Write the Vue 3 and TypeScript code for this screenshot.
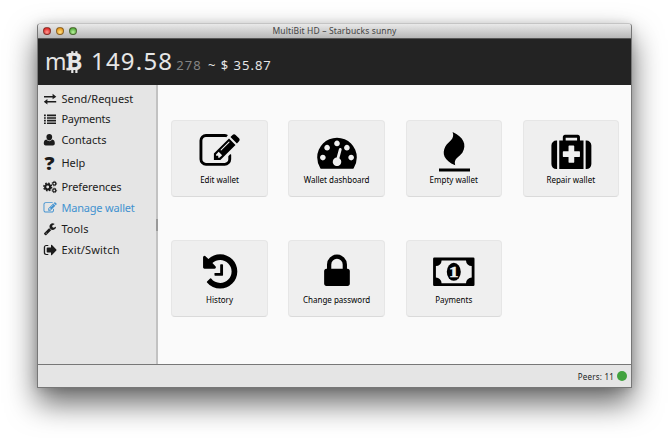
<script setup lang="ts">
interface NavItem {
  id: string
  label: string
  height: number
  tracking: number
}
interface Action {
  id: string
  label: string
}

const nav: NavItem[] = [
  { id: 'exchange', label: 'Send/Request', height: 20, tracking: 0 },
  { id: 'list', label: 'Payments', height: 20, tracking: -0.25 },
  { id: 'user', label: 'Contacts', height: 22, tracking: 0 },
  { id: 'help', label: 'Help', height: 24, tracking: 0 },
  { id: 'cogs', label: 'Preferences', height: 23, tracking: -0.1 },
  { id: 'edit', label: 'Manage wallet', height: 20, tracking: -0.18 },
  { id: 'wrench', label: 'Tools', height: 21, tracking: 0.1 },
  { id: 'exit', label: 'Exit/Switch', height: 22, tracking: 0.17 },
]

const actions: Action[] = [
  { id: 'edit', label: 'Edit wallet' },
  { id: 'dashboard', label: 'Wallet dashboard' },
  { id: 'empty', label: 'Empty wallet' },
  { id: 'repair', label: 'Repair wallet' },
  { id: 'history', label: 'History' },
  { id: 'password', label: 'Change password' },
  { id: 'money', label: 'Payments' },
]

const editPath =
  'M888 1184l116-116-152-152-116 116v56h96v96h56zm440-720q-16-16-33 1l-350 350q-17 17-1 33t33-1l350-350q17-17 1-33zm80 594v190q0 119-84.5 203.5t-203.5 84.5h-832q-119 0-203.5-84.5t-84.5-203.5v-832q0-119 84.5-203.5t203.5-84.5h832q63 0 117 25 15 7 18 23 3 17-9 29l-49 49q-14 14-32 8-23-6-45-6h-832q-66 0-113 47t-47 113v832q0 66 47 113t113 47h832q66 0 113-47t47-113v-126q0-13 9-22l64-64q15-15 35-7t20 29zm-96-738l288 288-672 672h-288v-288zm444 132l-92 92-288-288 92-92q28-28 68-28t68 28l152 152q28 28 28 68t-28 68z'
</script>

<template>
  <div class="desktop">
    <div class="window">
      <div class="titlebar">
        <div class="lights">
          <i class="light red"></i><i class="light amber"></i><i class="light green"></i>
        </div>
        <span class="title">MultiBit HD – Starbucks sunny</span>
      </div>

      <header class="balance">
        <span class="milli">m</span>
        <svg class="bitcoin" viewBox="0 0 18 24">
          <rect x="5.2" y="1.2" width="2.2" height="4" />
          <rect x="9.3" y="1.2" width="2.2" height="4" />
          <rect x="5.2" y="19" width="2.2" height="4" />
          <rect x="9.3" y="19" width="2.2" height="4" />
          <rect x="0.4" y="3.8" width="4" height="2.6" />
          <rect x="0.4" y="17.8" width="4" height="2.6" />
          <text x="0.6" y="20.4" textLength="16" lengthAdjust="spacingAndGlyphs">B</text>
        </svg>
        <span class="amount">149.58</span>
        <span class="minor">278</span>
        <span class="fiat">~ $ 35.87</span>
      </header>

      <div class="body">
        <nav class="sidebar">
          <a
            v-for="item in nav"
            :key="item.id"
            class="nav-item"
            :class="{ active: item.id === 'edit' }"
            :style="{ height: item.height + 'px', letterSpacing: item.tracking + 'px' }"
          >
            <svg class="nav-icon" viewBox="0 0 14 14">
              <g v-if="item.id === 'exchange'">
                <path d="M1 4h8.6V1.8L13.3 4.7 9.6 7.3V5.4H1zM13.2 9.1H4.4V7L.8 9.8l3.6 2.7v-1.9h8.8z" />
              </g>
              <g v-else-if="item.id === 'list'">
                <path d="M1 2.6h1.8v1.6H1zM4 2.6h9v1.6H4zM1 5.2h1.8v1.6H1zM4 5.2h9v1.6H4zM1 7.8h1.8v1.6H1zM4 7.8h9v1.6H4zM1 10.4h1.8V12H1zM4 10.4h9V12H4z" />
              </g>
              <g v-else-if="item.id === 'user'">
                <path d="M6.3 1.1c1.8 0 2.9 1.3 2.9 3s-1.2 3.5-2.9 3.5-2.9-1.8-2.9-3.5 1.1-3 2.9-3zM3.4 6.6Q4.7 8.3 6.3 8.3T9.2 6.6c2 .2 2.6 2 2.6 4 0 1.2-.9 1.9-1.9 1.9H2.7c-1 0-1.9-.7-1.9-1.9 0-2 .6-3.8 2.6-4z" />
              </g>
              <text v-else-if="item.id === 'help'" class="question" x="1.4" y="13.6" textLength="10" lengthAdjust="spacingAndGlyphs">?</text>
              <g v-else-if="item.id === 'cogs'" class="cogs">
                <circle cx="4.7" cy="7" r="2.5" stroke-width="2.2" />
                <circle cx="4.7" cy="7" r="3.9" stroke-width="1.4" stroke-dasharray="1.65 1.413" />
                <circle cx="11.3" cy="3.6" r="1.5" stroke-width="1.2" />
                <circle cx="11.3" cy="3.6" r="2.3" stroke-width=".8" stroke-dasharray="1 .806" />
                <circle cx="11.3" cy="10.4" r="1.5" stroke-width="1.2" />
                <circle cx="11.3" cy="10.4" r="2.3" stroke-width=".8" stroke-dasharray="1 .806" />
              </g>
              <path v-else-if="item.id === 'edit'" transform="translate(.5 .2) scale(.0074)" :d="editPath" />
              <path
                v-else-if="item.id === 'wrench'"
                transform="translate(.4 .4) scale(.0073)"
                d="M448 1472q0-26-19-45t-45-19-45 19-19 45 19 45 45 19 45-19 19-45zm644-420l-682 682q-37 37-90 37-52 0-91-37l-106-108q-38-36-38-90 0-53 38-91l681-681q39 98 114.500 173.500t173.500 114.500zm634-435q0 39-23 106-47 134-164.500 217.500t-258.500 83.500q-185 0-316.500-131.500t-131.500-316.500 131.500-316.500 316.500-131.500q58 0 121.500 16.500t107.500 46.500q16 11 16 28t-16 28l-293 169v224l193 107q5-3 79-48.500t135.500-81 70.500-35.500q15 0 23.500 10t8.500 25z"
              />
              <g v-else>
                <path d="M5.3 1.9H3.2C1.800 1.9.8 2.9.8 4.200v5.600c0 1.300 1 2.300 2.400 2.300h2.100v-1.200H3.400c-.8 0-1.300-.5-1.300-1.300V4.400c0-.8.5-1.300 1.300-1.300h1.900zM8 2.300c0-.6.6-.8 1-.4L13.300 6.400c.4.400.4.800 0 1.200L9 12.100c-.4.400-1 .2-1-.4V9.400H4.500c-.5 0-.8-.2-.8-.7V5.300c0-.5.3-.7.8-.7H8z" />
              </g>
            </svg>
            <span>{{ item.label }}</span>
          </a>
        </nav>
        <div class="divider"><i class="grip"></i></div>

        <main class="cards">
          <button v-for="action in actions" :key="action.id" class="card" type="button">
            <svg class="card-icon" viewBox="0 0 44 44">
              <path v-if="action.id === 'edit'" transform="translate(1.5 1.200) scale(.0225)" :d="editPath" />
              <path
                v-else-if="action.id === 'dashboard'"
                transform="translate(2.200 2.100) scale(.0221)"
                d="M384 1152q0-53-37.500-90.500t-90.500-37.500-90.500 37.500-37.500 90.500 37.500 90.500 90.500 37.500 90.500-37.500 37.500-90.500zm192-448q0-53-37.500-90.500t-90.500-37.500-90.500 37.500-37.500 90.500 37.500 90.500 90.500 37.500 90.500-37.500 37.500-90.500zm428 481l101-382q6-26-7.500-48.500t-38.500-29.500-48 6.500-30 39.500l-101 382q-60 5-107 43.500t-63 98.500q-20 77 20 146t117 89 146-20 89-117q16-60-6-117t-72-91zm660-33q0-53-37.500-90.500t-90.500-37.500-90.500 37.500-37.500 90.500 37.500 90.500 90.500 37.500 90.500-37.500 37.500-90.500zm-640-640q0-53-37.500-90.500t-90.500-37.500-90.500 37.500-37.500 90.500 37.500 90.500 90.500 37.500 90.500-37.500 37.500-90.500zm448 192q0-53-37.500-90.500t-90.500-37.500-90.500 37.500-37.500 90.500 37.500 90.500 90.500 37.500 90.500-37.500 37.500-90.500zm320 448q0 261-141 483-19 29-54 29h-1402q-35 0-54-29-141-221-141-483 0-182 71-348t191-286 286-191 348-71 348 71 286 191 191 286 71 348z"
              />
              <path
                v-else-if="action.id === 'empty'"
                d="M20.600 2C31.500 7 35 14.500 30.500 22.500c-3 4.700-9.300 5.500-7.300 12.800C12 30.500 9.500 23.500 13.500 16.200c3-4.800 9.800-7 7.100-14.200zM7 38.400h31v3.200h-31z"
              />
              <path
                v-else-if="action.id === 'repair'"
                transform="translate(2.400 2) scale(.0223)"
                d="M1280 1088v-192q0-14-9-23t-23-9h-224v-224q0-14-9-23t-23-9h-192q-14 0-23 9t-9 23v224h-224q-14 0-23 9t-9 23v192q0 14 9 23t23 9h224v224q0 14 9 23t23 9h192q14 0 23-9t9-23v-224h224q14 0 23-9t9-23zm-640-704h512v-128h-512v128zm-384 0v1280h-32q-92 0-158-66t-66-158v-832q0-92 66-158t158-66h32zm1184 0v1280h-1088v-1280h160v-160q0-40 28-68t68-28h576q40 0 68 28t28 68v160h160zm352 224v832q0 92-66 158t-158 66h-32v-1280h32q92 0 158 66t66 158z"
              />
              <path
                v-else-if="action.id === 'history'"
                transform="translate(2.200 1.500) scale(.0223)"
                d="M1664 896q0 156-61 298t-164 245-245 164-298 61q-172 0-327-72.500t-264-204.500q-7-10-6.500-22.500t8.500-20.500l137-138q10-9 25-9 16 2 23 12 73 95 179 147t225 52q104 0 198.500-40.500t163.500-109.500 109.500-163.500 40.500-198.500-40.500-198.500-109.500-163.500-163.500-109.500-198.500-40.500q-98 0-188 35.500t-160 101.500l137 138q31 30 14 69-17 40-59 40h-448q-26 0-45-19t-19-45v-448q0-42 40-59 39-17 69 14l130 129q107-101 244.500-156.500t284.500-55.500q156 0 298 61t245 164 164 245 61 298zm-640-288v448q0 14-9 23t-23 9h-320q-14 0-23-9t-9-23v-64q0-14 9-23t23-9h224v-352q0-14 9-23t23-9h64q14 0 23 9t9 23z"
              />
              <path
                v-else-if="action.id === 'password'"
                transform="translate(2 1.700) scale(.0223)"
                d="M640 768h512v-192q0-106-75-181t-181-75-181 75-75 181v192zm832 96v576q0 40-28 68t-68 28h-960q-40 0-68-28t-28-68v-576q0-40 28-68t68-28h32v-192q0-184 132-316t316-132 316 132 132 316v192h32q40 0 68 28t28 68z"
              />
              <g v-else>
                <path
                  fill-rule="evenodd"
                  d="M2.300 7.500h39a1.200 1.200 0 0 1 1.200 1.200v26a1.200 1.200 0 0 1-1.200 1.200H2.300a1.200 1.200 0 0 1-1.200-1.200v-26A1.200 1.200 0 0 1 2.300 7.500zM9.600 10.400a5.800 5.800 0 0 1-5.700 5.700v11.500a5.800 5.800 0 0 1 5.700 5.700h24.400a5.800 5.800 0 0 1 5.700-5.700V16.100a5.800 5.800 0 0 1-5.700-5.700z"
                />
                <ellipse cx="21.800" cy="21.800" rx="7" ry="9" />
                <text class="one" x="16.900" y="27.300" textLength="9.500" lengthAdjust="spacingAndGlyphs">1</text>
              </g>
            </svg>
            <span class="card-label">{{ action.label }}</span>
          </button>
        </main>
      </div>

      <footer class="status">
        <span>Peers: 11</span>
        <i class="online"></i>
      </footer>
    </div>
  </div>
</template>

<style>
body {
  background: #fff;
  overflow: hidden;
}
</style>

<style scoped>
.desktop {
  box-sizing: border-box;
  width: 669px;
  height: 438px;
  padding: 23px 37px 51px;
  overflow: hidden;
  font-family: 'Noto Sans', 'Open Sans', sans-serif;
  color: #222;
}
.window {
  box-sizing: border-box;
  display: flex;
  flex-direction: column;
  width: 595px;
  height: 365px;
  border: 1px solid #777;
  border-top-color: #c4c4c4;
  border-radius: 4px 4px 1px 1px;
  overflow: hidden;
  background: #e5e5e5;
  box-shadow: 0 15px 30px rgba(0, 0, 0, 0.6), 0 1px 10px rgba(0, 0, 0, 0.14);
}
.titlebar {
  display: grid;
  grid-template-columns: 60px 1fr 60px;
  align-items: center;
  height: 14px;
  flex: none;
  background: linear-gradient(#e9e9e9, #b7b7b7);
  border-bottom: 1px solid #555;
}
.lights {
  display: flex;
  gap: 5px;
  padding-left: 5px;
}
.light {
  box-sizing: border-box;
  width: 8px;
  height: 8px;
  border-radius: 50%;
  border: 1px solid rgba(60, 40, 30, 0.55);
}
.red { background: radial-gradient(circle at 50% 70%, #ff9b93, #e32d2c 70%); }
.amber { background: radial-gradient(circle at 50% 70%, #ffe28a, #e79a1b 75%); }
.green { background: radial-gradient(circle at 50% 70%, #b9f39d, #52aa3b 75%); }
.title {
  text-align: center;
  font-size: 8.5px;
  line-height: 14px;
  color: #444;
  letter-spacing: 0.14px;
  white-space: nowrap;
}
.balance {
  display: flex;
  align-items: baseline;
  height: 46px;
  flex: none;
  box-sizing: border-box;
  padding-left: 7px;
  line-height: 44px;
  background: #232323;
  color: #e6e6e6;
  white-space: nowrap;
}
.milli { font-size: 23px; }
.bitcoin {
  width: 18px;
  height: 24px;
  align-self: center;
  fill: #e6e6e6;
  margin-left: -1px;
  overflow: visible;
}
.bitcoin text {
  font: bold 23px 'Noto Sans', sans-serif;
}
.amount {
  font-size: 24px;
  letter-spacing: 1.2px;
  margin-left: 7.5px;
}
.minor {
  font-size: 13px;
  letter-spacing: 1px;
  color: #858585;
  margin-left: 3px;
}
.fiat {
  font-size: 13px;
  letter-spacing: 1px;
  margin-left: 6.3px;
}
.body {
  display: flex;
  flex: 1;
  min-height: 0;
}
.sidebar {
  width: 118px;
  padding-top: 4px;
  background: #e5e5e5;
}
.nav-item {
  display: flex;
  align-items: center;
  padding-left: 5px;
  gap: 4.4px;
  font-size: 11px;
  line-height: 16px;
  color: #1c1c1c;
  white-space: nowrap;
}
.nav-item.active { color: #4292d0; }
.nav-icon {
  width: 14px;
  height: 14px;
  flex: none;
  fill: currentColor;
  overflow: visible;
}
.question { font: 900 17px 'Noto Sans', sans-serif; }
.cogs {
  fill: none;
  stroke: currentColor;
}
.divider {
  display: flex;
  align-items: center;
  width: 2px;
  background: #c2c2c2;
}
.grip {
  width: 2px;
  height: 12px;
  background: #999;
}
.cards {
  flex: 1;
  display: grid;
  grid-template-columns: repeat(4, 96.4px);
  grid-auto-rows: 77px;
  column-gap: 20.7px;
  row-gap: 43px;
  align-content: start;
  padding: 35px 0 0 13.35px;
  background: #fafafa;
}
.card {
  box-sizing: border-box;
  display: flex;
  flex-direction: column;
  align-items: center;
  margin: 0;
  padding: 9px 0 0;
  border: 1px solid #e6e6e6;
  border-bottom-color: #dadada;
  border-radius: 4px;
  background: #efefef;
  font-family: inherit;
  color: #000;
}
.card-icon {
  width: 44px;
  height: 44px;
  flex: none;
  overflow: visible;
}
.one {
  font: bold 14px 'Liberation Serif', serif;
  fill: #efefef;
  stroke: #efefef;
  stroke-width: 0.5px;
}
.card-label {
  font-size: 8px;
  line-height: 12px;
  white-space: nowrap;
}
.status {
  display: flex;
  align-items: center;
  justify-content: flex-end;
  gap: 3px;
  height: 22px;
  flex: none;
  padding-right: 4px;
  border-top: 1px solid #777;
  font-size: 8px;
  letter-spacing: 0.2px;
}
.online {
  width: 10px;
  height: 10px;
  border-radius: 50%;
  background: #42a23f;
}
</style>
